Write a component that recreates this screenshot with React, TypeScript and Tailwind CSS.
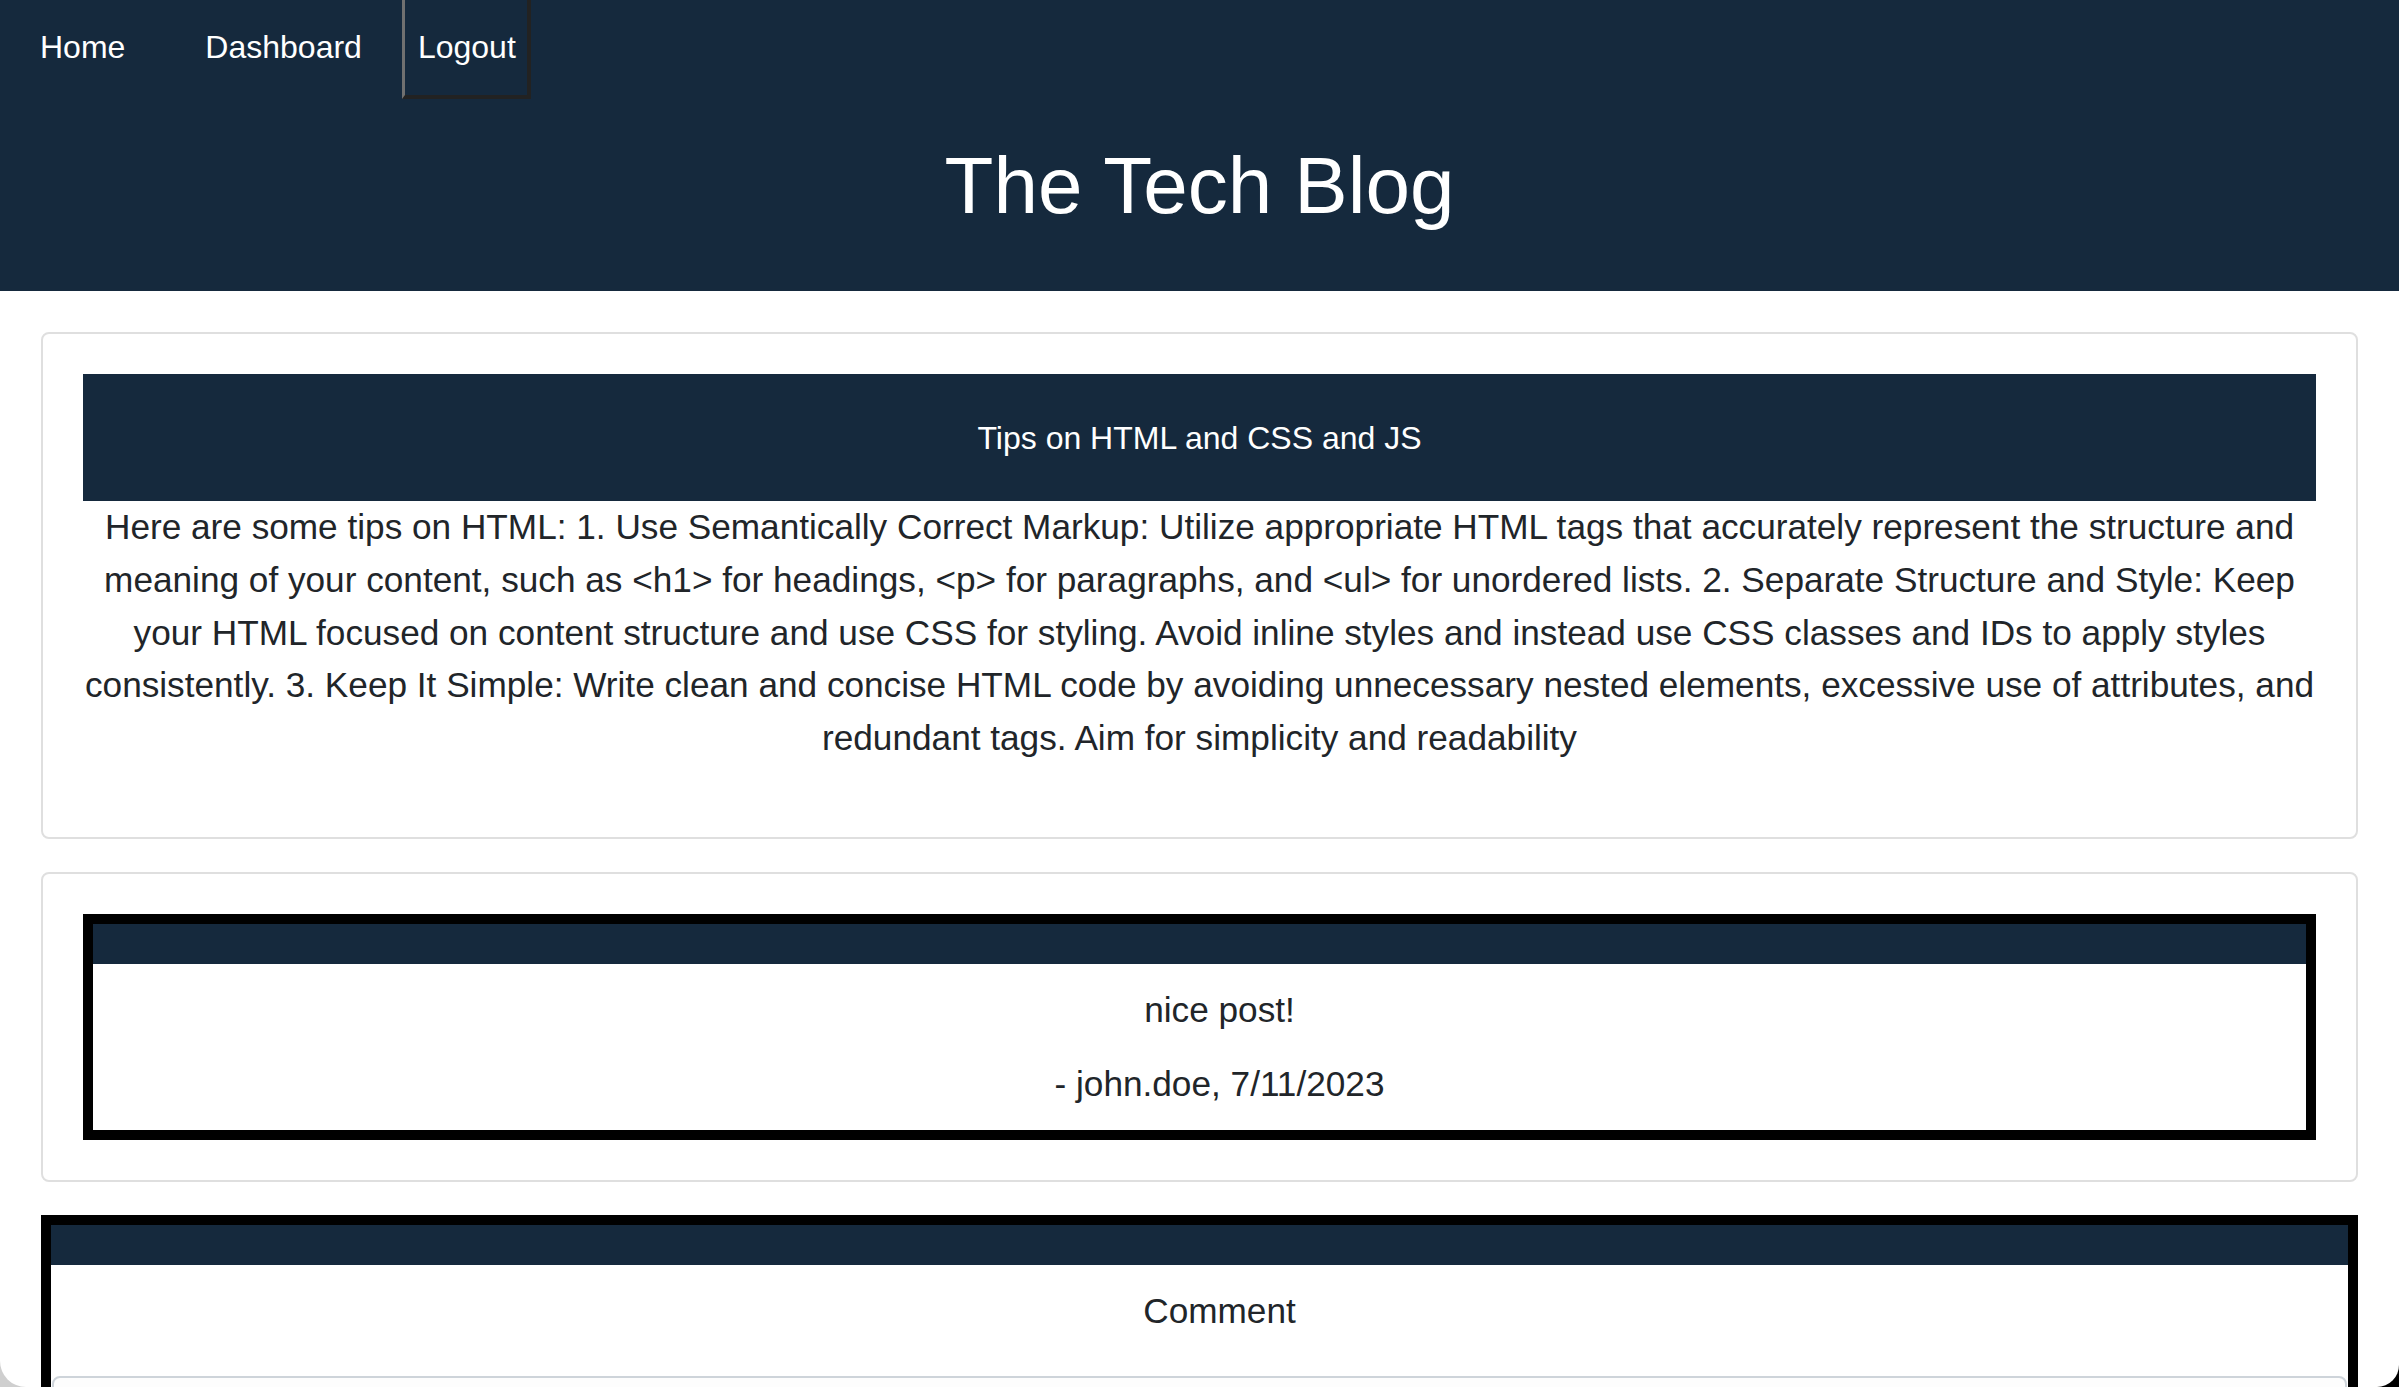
import React from 'react';

const navy = 'bg-[#15293d]';

const App: React.FC = () => {
    return (
        <div className="relative h-[1387px] w-full overflow-hidden bg-white font-['Liberation_Sans',Arial,sans-serif] text-[#212529]">
            {/* Header */}
            <header className={`${navy} h-[291px] flex flex-col text-white`}>
                <nav className="flex items-start text-[32px] leading-[37px]">
                    <a className="ml-[40px] pt-[29px]">Home</a>
                    <a className="ml-[80px] pt-[29px]">Dashboard</a>
                    <button className="ml-[40px] pt-[29px] pb-[29px] pl-[13px] pr-[11px] border-l-[3px] border-r-[4px] border-b-[4px] border-l-[#707070] border-r-[#222222] border-b-[#222222] text-white text-[32px] leading-[37px]">
                        Logout
                    </button>
                </nav>
                <h1 className="mt-[41px] text-center text-[80px] leading-[92px]">The Tech Blog</h1>
            </header>

            <main className="flex flex-col gap-[33px] px-[41px] pt-[41px]">
                {/* Post */}
                <section className="border-2 border-[#dfdfdf] rounded-[8px] p-[40px]">
                    <div className={`${navy} h-[127px] flex items-center justify-center text-white text-[32px]`}>
                        Tips on HTML and CSS and JS
                    </div>
                    <p className="mb-[32px] text-center text-[35.2px] leading-[52.8px]">
                        Here are some tips on HTML: 1. Use Semantically Correct Markup: Utilize appropriate HTML tags that accurately represent the structure and meaning of your content, such as &lt;h1&gt; for headings, &lt;p&gt; for paragraphs, and &lt;ul&gt; for unordered lists. 2. Separate Structure and Style: Keep your HTML focused on content structure and use CSS for styling. Avoid inline styles and instead use CSS classes and IDs to apply styles consistently. 3. Keep It Simple: Write clean and concise HTML code by avoiding unnecessary nested elements, excessive use of attributes, and redundant tags. Aim for simplicity and readability
                    </p>
                </section>

                {/* Comments */}
                <section className="border-2 border-[#dfdfdf] rounded-[8px] p-[40px]">
                    <div className="border-[10px] border-black">
                        <div className={`${navy} h-[40px]`} />
                        <ul className="flex flex-col items-center gap-[21px] pl-[40px] pt-[20px] pb-[19px] text-[35.2px] leading-[52.8px]">
                            <li>nice post!</li>
                            <li>- john.doe, 7/11/2023</li>
                        </ul>
                    </div>
                </section>

                {/* New comment */}
                <section className="border-[10px] border-black">
                    <div className={`${navy} h-[40px]`} />
                    <div className="flex flex-col pt-[20px]">
                        <label className="pl-[40px] text-center text-[35.2px] leading-[52.8px]">Comment</label>
                        <textarea className="mx-[1px] mt-[39px] h-[200px] rounded-[8px] border-2 border-[#ced4da] bg-[#fdfdfd]" />
                    </div>
                </section>
            </main>

            {/* window corners */}
            <div className="absolute bottom-0 left-0 w-[26px] h-[26px] bg-[#cfcfcf]">
                <div className="w-full h-full bg-white rounded-bl-[26px]" />
            </div>
            <div className="absolute bottom-0 right-0 w-[22px] h-[22px] bg-black">
                <div className="w-full h-full bg-white rounded-br-[22px]" />
            </div>
        </div>
    );
};

export default App;
